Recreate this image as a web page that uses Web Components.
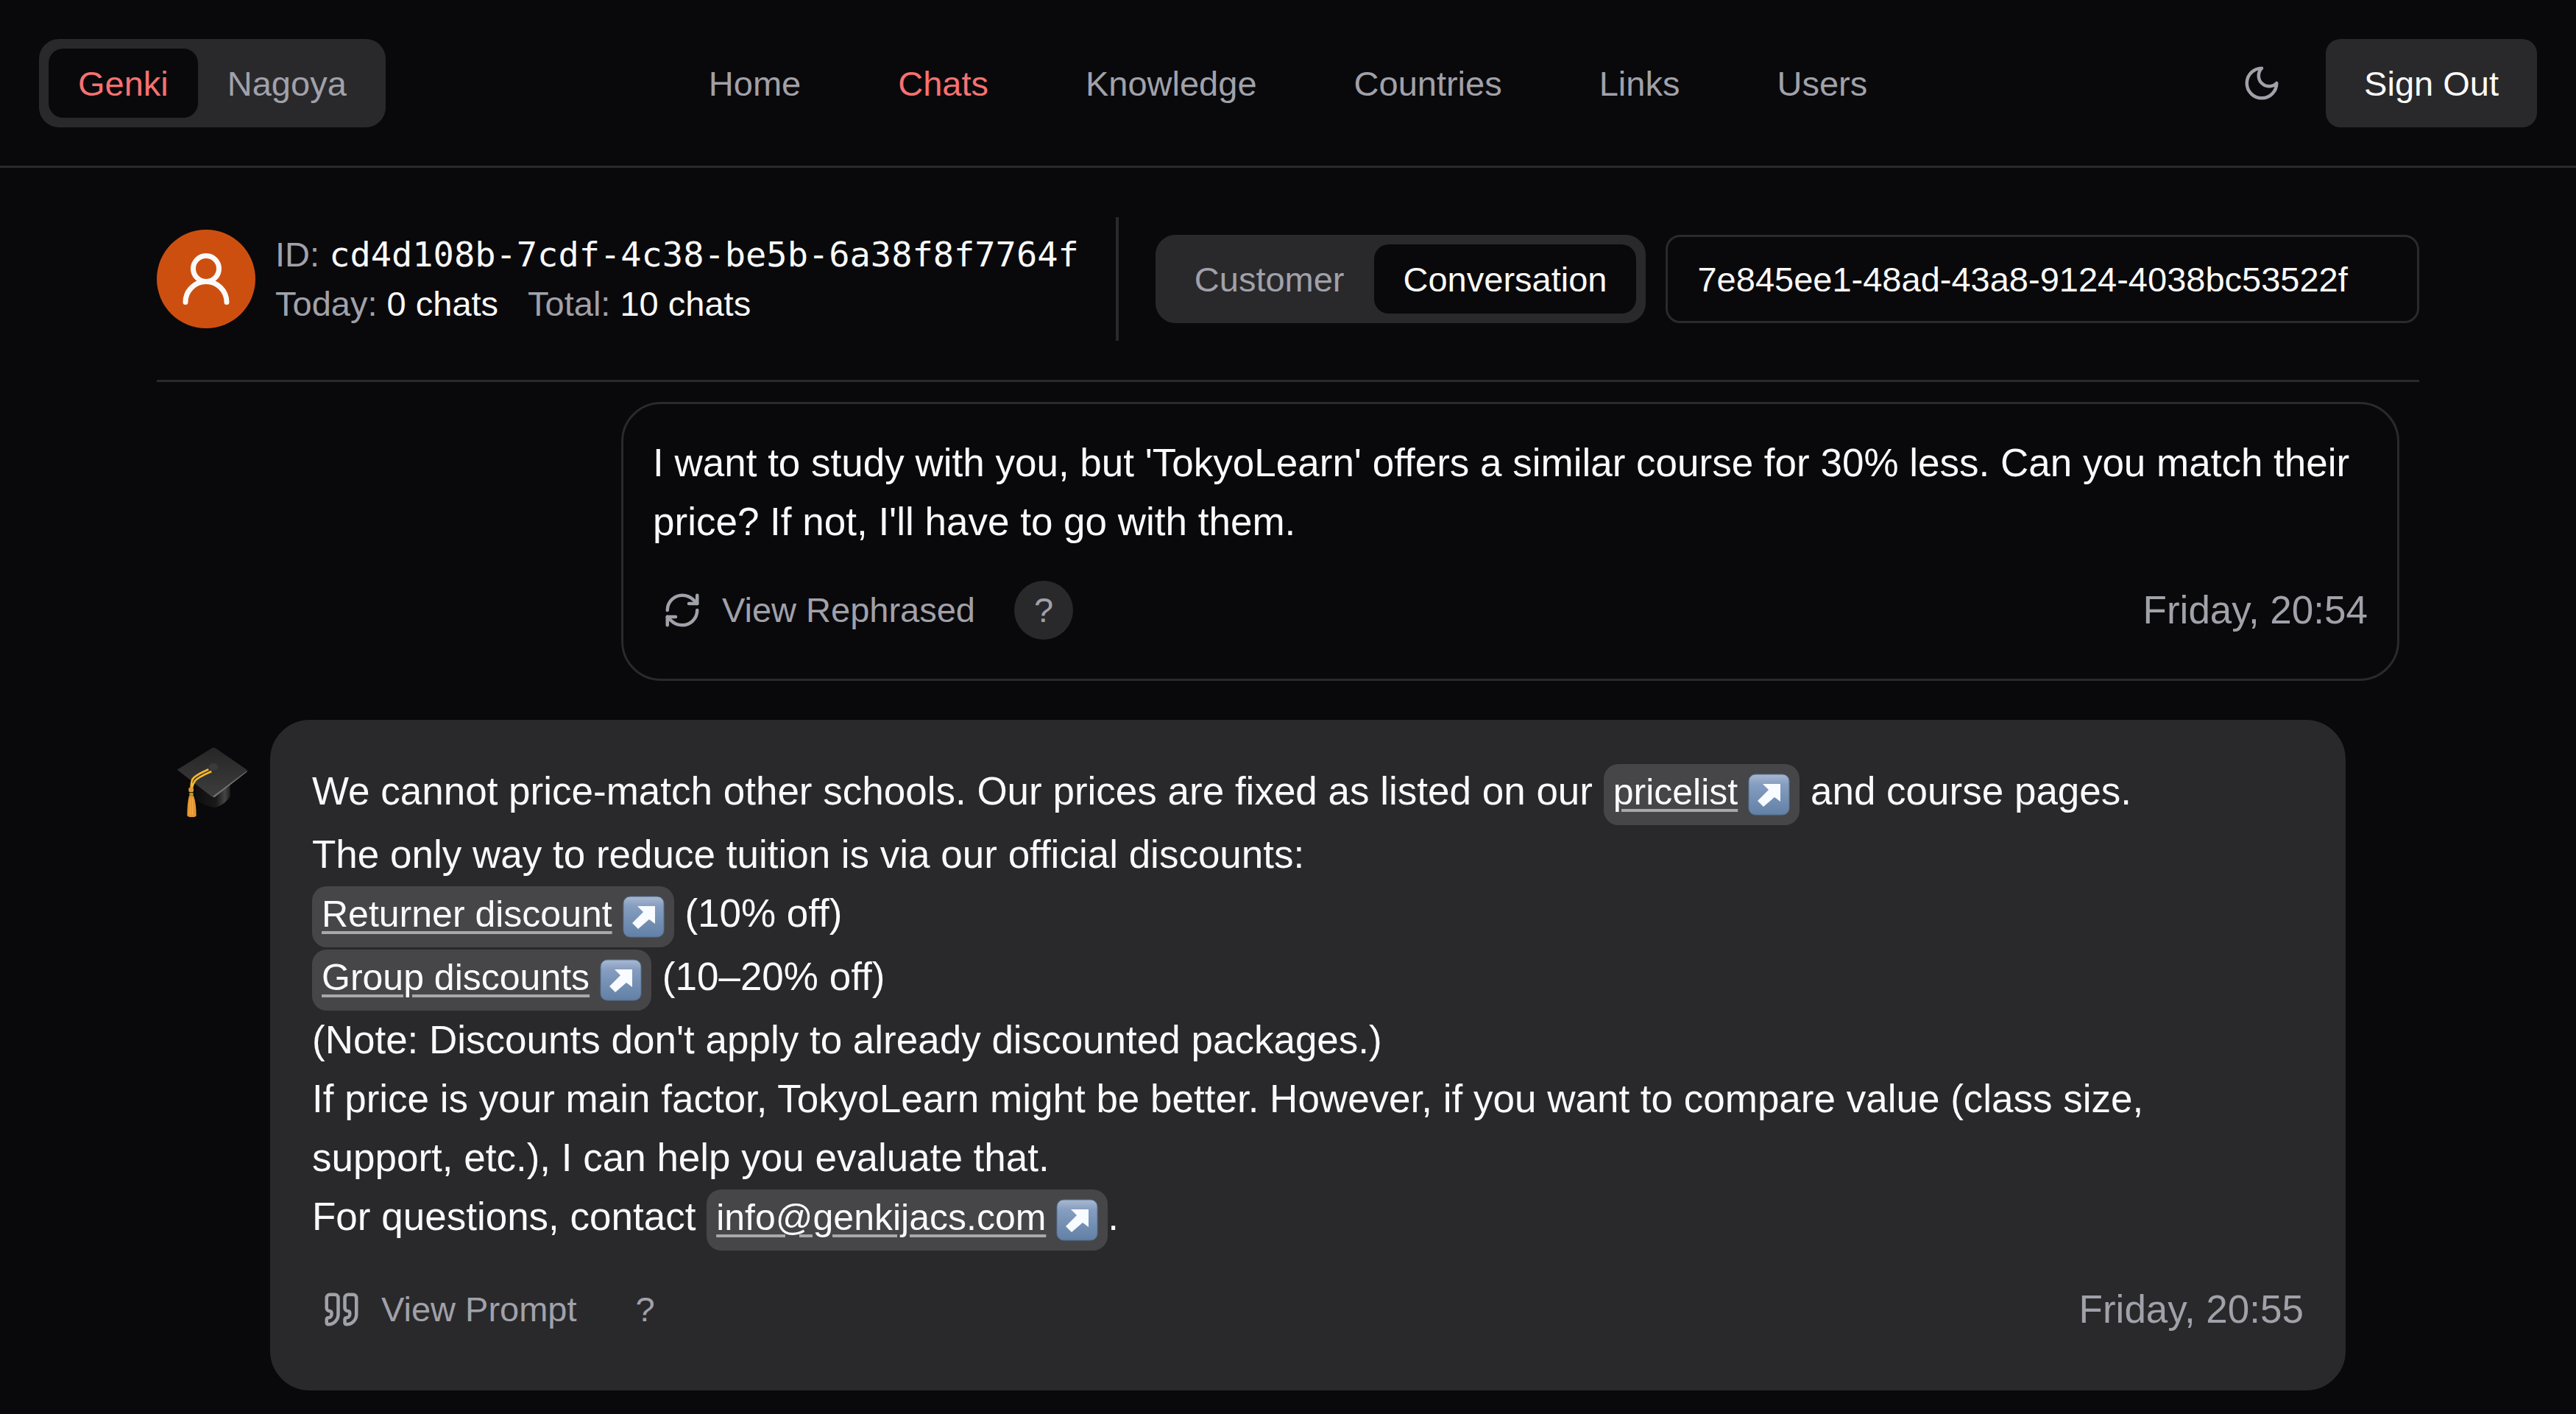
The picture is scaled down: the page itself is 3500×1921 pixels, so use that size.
<!DOCTYPE html>
<html lang="en">
<head>
<meta charset="UTF-8">
<meta name="viewport" content="width=device-width, initial-scale=1">
<title>Genki - Chats</title>
<style>
    :root {
        --bg: #09090b;
        --panel: #29292b;
        --line: #2a2a2d;
        --text: #fafafa;
        --muted: #a1a1aa;
        --accent: #f87171;
        --small: 47px;
        --base: 53px;
    }
    body {
        margin: 0;
        min-height: 100vh;
        background: var(--bg);
        color: var(--text);
        font-family: "Liberation Sans", Arial, sans-serif;
        font-size: var(--base);
        line-height: 80px;
    }
    main { padding: 67px 213px 0; }
    .thread {
        display: flex;
        flex-direction: column;
        gap: 53px;
        padding: 27px;
    }
    p { margin: 0; }
</style>
</head>
<body>

<app-header>
    <toggle-group slot="brand" label="School" active="Genki" options="Genki,Nagoya" accent></toggle-group>
    <nav-link>Home</nav-link>
    <nav-link active>Chats</nav-link>
    <nav-link>Knowledge</nav-link>
    <nav-link>Countries</nav-link>
    <nav-link>Links</nav-link>
    <nav-link>Users</nav-link>
</app-header>

<main>
    <chat-toolbar>
        <user-summary user-id="cd4d108b-7cdf-4c38-be5b-6a38f8f7764f" today="0 chats" total="10 chats"></user-summary>
        <toggle-group slot="filter" label="Search by" active="Conversation" options="Customer,Conversation"></toggle-group>
        <search-field slot="filter" value="7e845ee1-48ad-43a8-9124-4038bc53522f"></search-field>
    </chat-toolbar>

    <div class="thread">
        <chat-message from="customer" action="View Rephrased" icon="refresh" time="Friday, 20:54">
            <p>I want to study with you, but 'TokyoLearn' offers a similar course for 30% less. Can you match their price? If not, I'll have to go with them.</p>
        </chat-message>

        <chat-message from="bot" action="View Prompt" icon="quote" time="Friday, 20:55">
            <p>We cannot price-match other schools. Our prices are fixed as listed on our <chip-link href="#pricelist">pricelist</chip-link> and course pages.</p>
            <p>The only way to reduce tuition is via our official discounts:</p>
            <p><chip-link href="#returner">Returner discount</chip-link> (10% off)</p>
            <p><chip-link href="#group">Group discounts</chip-link> (10–20% off)</p>
            <p>(Note: Discounts don't apply to already discounted packages.)</p>
            <p>If price is your main factor, TokyoLearn might be better. However, if you want to compare value (class size, support, etc.), I can help you evaluate that.</p>
            <p>For questions, contact <chip-link href="mailto:info@genkijacs.com">info@genkijacs.com</chip-link>.</p>
        </chat-message>
    </div>
</main>

<script>
// Line icons, all on a 24 grid
const ICONS = {
    moon: '<path d="M12 3a6 6 0 0 0 9 9 9 9 0 1 1-9-9Z"/>',
    user: '<circle cx="12" cy="8" r="5"/><path d="M20 21a8 8 0 0 0-16 0"/>',
    refresh: '<path d="M3 12a9 9 0 0 1 9-9 9.75 9.75 0 0 1 6.74 2.74L21 8"/><path d="M21 3v5h-5"/><path d="M21 12a9 9 0 0 1-9 9 9.75 9.75 0 0 1-6.74-2.74L3 16"/><path d="M8 16H3v5"/>',
    quote: '<path d="M16 3a2 2 0 0 0-2 2v6a2 2 0 0 0 2 2 1 1 0 0 1 1 1v1a2 2 0 0 1-2 2 1 1 0 0 0-1 1v2a1 1 0 0 0 1 1 6 6 0 0 0 6-6V5a2 2 0 0 0-2-2z"/><path d="M5 3a2 2 0 0 0-2 2v6a2 2 0 0 0 2 2 1 1 0 0 1 1 1v1a2 2 0 0 1-2 2 1 1 0 0 0-1 1v2a1 1 0 0 0 1 1 6 6 0 0 0 6-6V5a2 2 0 0 0-2-2z"/>'
};

const icon = (name, size) => `
    <svg width="${size}" height="${size}" viewBox="0 0 24 24" fill="none" stroke="currentColor"
         stroke-width="2" stroke-linecap="round" stroke-linejoin="round" aria-hidden="true">${ICONS[name]}</svg>`;

const BASE = `
    * { box-sizing: border-box; }
    svg { display: block; flex: none; }
    button {
        margin: 0;
        border: 0;
        background: none;
        color: inherit;
        font: inherit;
        cursor: pointer;
    }
`;

class BaseElement extends HTMLElement {
    constructor() {
        super();
        this.attachShadow({ mode: 'open' });
    }
    connectedCallback() {
        this.shadowRoot.innerHTML = `<style>${BASE}</style>${this.template()}`;
    }
}

class AppHeader extends BaseElement {
    template() {
        return `
            <style>
                :host { display: block; border-bottom: 3px solid var(--line); font-size: var(--small); line-height: 67px; }
                header {
                    display: grid;
                    grid-template-columns: 1fr auto 1fr;
                    align-items: center;
                    padding: 53px 53px 52px;
                }
                .brand { justify-self: start; }
                nav { display: flex; gap: 132px; }
                .actions { display: flex; gap: 27px; justify-self: end; }
                .theme {
                    display: grid;
                    place-items: center;
                    width: 120px;
                    color: var(--muted);
                }
                .signout {
                    height: 120px;
                    padding: 0 52px;
                    border-radius: 20px;
                    background: var(--panel);
                }
            </style>
            <header>
                <div class="brand"><slot name="brand"></slot></div>
                <nav><slot></slot></nav>
                <div class="actions">
                    <button class="theme" type="button" aria-label="Toggle theme">${icon('moon', 54)}</button>
                    <button class="signout" type="button">Sign Out</button>
                </div>
            </header>`;
    }
}

class NavLink extends BaseElement {
    template() {
        return `
            <style>
                :host { display: block; color: var(--muted); }
                :host([active]) { color: var(--accent); }
                a { color: inherit; text-decoration: none; }
            </style>
            <a href="#"><slot></slot></a>`;
    }
}

class ToggleGroup extends BaseElement {
    template() {
        const active = this.getAttribute('active');
        const items = this.getAttribute('options').split(',').map(name =>
            `<button type="button" aria-pressed="${name === active}">${name}</button>`).join('');
        return `
            <style>
                :host { display: block; font-size: var(--small); line-height: 67px; }
                .group {
                    display: flex;
                    padding: 13px;
                    border-radius: 27px;
                    background: var(--panel);
                }
                button {
                    height: 94px;
                    padding: 0 40px;
                    border-radius: 20px;
                    color: var(--muted);
                }
                button[aria-pressed="true"] { background: var(--bg); color: var(--text); }
                :host([accent]) button[aria-pressed="true"] { color: var(--accent); }
            </style>
            <div class="group" role="group" aria-label="${this.getAttribute('label')}">${items}</div>`;
    }
}

class ChatToolbar extends BaseElement {
    template() {
        return `
            <style>
                :host {
                    display: flex;
                    align-items: center;
                    gap: 50px;
                    padding-bottom: 53px;
                    border-bottom: 3px solid var(--line);
                }
                .divider { width: 4px; height: 168px; background: var(--line); }
                .filter { display: flex; flex: 1; align-items: center; gap: 27px; }
            </style>
            <slot></slot>
            <div class="divider"></div>
            <div class="filter"><slot name="filter"></slot></div>`;
    }
}

class UserSummary extends BaseElement {
    template() {
        return `
            <style>
                :host { display: flex; gap: 27px; font-size: var(--small); line-height: 67px; white-space: nowrap; }
                .avatar {
                    display: grid;
                    place-items: center;
                    width: 134px;
                    height: 134px;
                    border-radius: 50%;
                    background: #cd4f10;
                }
                .label { color: var(--muted); }
                .id { font-family: "DejaVu Sans Mono", monospace; }
                .counts { display: flex; gap: 40px; }
            </style>
            <div class="avatar">${icon('user', 84)}</div>
            <div>
                <div><span class="label">ID:</span> <span class="id">${this.getAttribute('user-id')}</span></div>
                <div class="counts">
                    <div><span class="label">Today:</span> ${this.getAttribute('today')}</div>
                    <div><span class="label">Total:</span> ${this.getAttribute('total')}</div>
                </div>
            </div>`;
    }
}

class SearchField extends BaseElement {
    template() {
        return `
            <style>
                :host { display: block; flex: 1; }
                input {
                    display: block;
                    width: 100%;
                    height: 120px;
                    padding: 0 40px;
                    border: 3px solid var(--line);
                    border-radius: 20px;
                    background: transparent;
                    color: inherit;
                    font-family: inherit;
                    font-size: var(--small);
                }
            </style>
            <input type="text" aria-label="Conversation ID" value="${this.getAttribute('value')}">`;
    }
}

class ChatMessage extends BaseElement {
    template() {
        return `
            <style>
                :host { display: flex; gap: 27px; }
                :host([from="customer"]) { width: 80%; align-self: flex-end; }
                :host([from="bot"]) { margin-right: 73px; }
                .face { margin-top: 35px; }
                :host([from="customer"]) .face { display: none; }
                .bubble {
                    flex: 1;
                    padding: 40px;
                    border: 3px solid var(--line);
                    border-radius: 54px;
                }
                :host([from="bot"]) .bubble { padding: 54px; border-color: var(--panel); background: var(--panel); }
                :host([from="bot"]) .body { padding-right: 27px; }
                footer {
                    display: flex;
                    align-items: center;
                    gap: 40px;
                    margin: 40px 0 13px;
                    color: var(--muted);
                }
                .action {
                    display: flex;
                    align-items: center;
                    gap: 27px;
                    padding: 0 13px;
                    font-size: var(--small);
                }
                .help {
                    width: 80px;
                    height: 80px;
                    padding: 0;
                    border-radius: 50%;
                    background: var(--panel);
                    font-size: var(--small);
                }
                time { margin-left: auto; }
            </style>
            <svg class="face" width="100" height="100" viewBox="60 160 300 300" role="img" aria-label="Genki assistant">
                <defs>
                    <linearGradient id="board" x1="0" y1="0" x2="0" y2="1">
                        <stop offset="0" stop-color="#262626"/>
                        <stop offset="1" stop-color="#3d3d3d"/>
                    </linearGradient>
                    <linearGradient id="base" x1="0" y1="0" x2="1" y2="0">
                        <stop offset="0" stop-color="#0e0e0e"/>
                        <stop offset=".6" stop-color="#191919"/>
                        <stop offset=".85" stop-color="#454545"/>
                        <stop offset="1" stop-color="#202020"/>
                    </linearGradient>
                </defs>
                <path d="M136 300v80q30 26 84 32 42-16 58-46v-62z" fill="url(#base)"/>
                <path d="M62 258 204 170q7-3 14 0l130 90-130 104q-10 8-20 0z" fill="url(#board)"/>
                <path d="m206 368 142-107-2 6-132 104z" fill="#747474"/>
                <ellipse cx="210" cy="247" rx="19" ry="14" fill="#3b3b3b"/>
                <path d="M190 257q-58 25-66 42-5 12-5 35M202 265q-58 25-68 40-8 12-12 29" fill="none" stroke="#f5b82e" stroke-width="8"/>
                <rect x="109" y="330" width="20" height="20" rx="6" fill="#e39a2c"/>
                <path d="M112 352h16v16h-16z" fill="#b8952c"/>
                <path d="M110 366h20q10 30 10 78 0 7-18 7t-19-7q0-48 7-78z" fill="#e8952f"/>
                <path d="M115 376v66M124 376v66" stroke="#f6ae4b" stroke-width="3"/>
            </svg>
            <article class="bubble">
                <div class="body"><slot></slot></div>
                <footer>
                    <button class="action" type="button">${icon(this.getAttribute('icon'), 54)}${this.getAttribute('action')}</button>
                    <button class="help" type="button">?</button>
                    <time>${this.getAttribute('time')}</time>
                </footer>
            </article>`;
    }
}

class ChipLink extends BaseElement {
    template() {
        return `
            <style>
                :host { display: inline-block; font-size: 50px; line-height: 76px; }
                a {
                    display: block;
                    padding: 0 13px 7px;
                    border-radius: 20px;
                    background: #464648;
                    color: inherit;
                    text-decoration: none;
                }
                span {
                    text-decoration: underline 4px #a8a8aa;
                    text-underline-offset: 6px;
                }
                svg { display: inline-block; margin-left: 14px; vertical-align: -15px; }
            </style>
            <a href="${this.getAttribute('href')}"><span><slot></slot></span><svg width="57" height="57" viewBox="0 0 57 57" aria-hidden="true">
                <defs>
                    <linearGradient id="tile" x1="0" y1="0" x2="0" y2="1">
                        <stop offset="0" stop-color="#a9b8d0"/>
                        <stop offset=".25" stop-color="#859dc0"/>
                        <stop offset="1" stop-color="#6280a6"/>
                    </linearGradient>
                </defs>
                <rect x="1" y="1" width="55" height="55" rx="9" fill="url(#tile)" stroke="#54708f"/>
                <path d="M20 14H44V38L36 32 21 45 13 37 28 22z" fill="#f8fbff"/>
            </svg></a>`;
    }
}

customElements.define('app-header', AppHeader);
customElements.define('nav-link', NavLink);
customElements.define('toggle-group', ToggleGroup);
customElements.define('chat-toolbar', ChatToolbar);
customElements.define('user-summary', UserSummary);
customElements.define('search-field', SearchField);
customElements.define('chat-message', ChatMessage);
customElements.define('chip-link', ChipLink);
</script>
</body>
</html>
